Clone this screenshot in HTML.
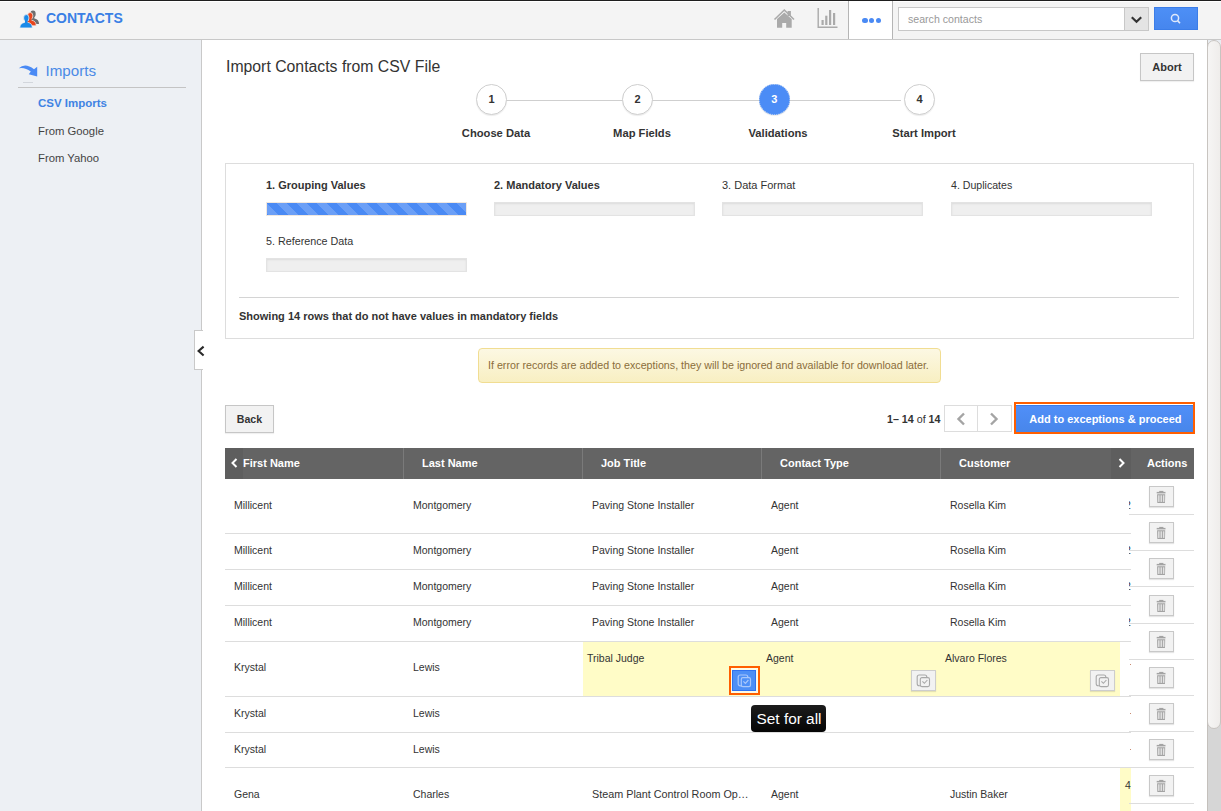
<!DOCTYPE html>
<html><head><meta charset="utf-8">
<style>
*{box-sizing:border-box;margin:0;padding:0}
html,body{width:1221px;height:811px;overflow:hidden;background:#fff}
body{font-family:"Liberation Sans",sans-serif;color:#333;position:relative;font-size:11px}
.a{position:absolute;white-space:nowrap}
.b{font-weight:bold}
.ln{position:absolute;background:#ddd}
#top{position:absolute;left:0;top:0;width:1221px;height:40px;background:#f4f4f4;border-bottom:1px solid #c8c8c8}
#side{position:absolute;left:0;top:40px;width:202px;height:771px;background:#edf0f4;border-right:1px solid #c9c9c9}
.btn{position:absolute;background:#f2f2f2;border:1px solid #c6c6c6;font-weight:bold;color:#333;text-align:center;box-shadow:0 1px 1px rgba(0,0,0,.06)}
.circ{position:absolute;width:31px;height:31px;border-radius:50%;border:1px solid #cfcfcf;background:#fff;font-weight:bold;font-size:11px;text-align:center;line-height:29px;color:#333;box-shadow:0 1px 1px rgba(0,0,0,.08)}
.stl{position:absolute;font-weight:bold;font-size:11.2px;color:#333;text-align:center;width:120px;top:127px}
.vt{position:absolute;font-size:11px;color:#333}
.bar{position:absolute;width:201px;height:14px;background:#efefef;border:1px solid #e3e3e3;box-shadow:inset 0 1px 2px rgba(0,0,0,.08)}
.th{position:absolute;top:457px;color:#fff;font-weight:bold;font-size:11px}
.td{position:absolute;color:#333;font-size:10.5px}
.rs{position:absolute;height:1px;background:#ddd}
.trash{position:absolute;left:1149px;width:25px;height:21px;background:#f2f2f2;border:1px solid #c8c8c8;box-shadow:0 1px 1px rgba(0,0,0,.1)}
.copy{position:absolute;width:25px;height:21px;background:#f2f2f2;border:1px solid #cdcdcd;box-shadow:0 1px 1px rgba(0,0,0,.1)}
</style></head><body>
<div id="top"></div>
<div class="a" style="left:0;top:0;width:1221px;height:1px;background:#1e1e1e"></div>
<div class="a" style="left:0;top:1px;width:1221px;height:1px;background:#fff"></div>
<!-- logo -->
<svg class="a" style="left:0;top:0" width="44" height="34" viewBox="0 0 44 34"><g transform="translate(6.7,-4)"><ellipse cx="26.3" cy="18" rx="2.7" ry="3.4" fill="#6e6e6e" /><path d="M19.8 27.9 Q19.8 23.2 24.6 22.4 L28 22.4 Q32.3 23.2 32.3 27.9 Z" fill="#6e6e6e" /><rect x="25" y="20" width="2.6" height="3.5" fill="#6e6e6e"/></g><g transform="translate(3.9,-2.1)"><ellipse cx="26.3" cy="18" rx="2.7" ry="3.4" fill="#e8461e" stroke="#f4f4f4" stroke-width="0.7"/><path d="M19.8 27.9 Q19.8 23.2 24.6 22.4 L28 22.4 Q32.3 23.2 32.3 27.9 Z" fill="#e8461e" stroke="#f4f4f4" stroke-width="0.7"/><rect x="25" y="20" width="2.6" height="3.5" fill="#e8461e"/></g><g transform="translate(0,0)"><ellipse cx="26.3" cy="18" rx="2.7" ry="3.4" fill="#1a8ae8" stroke="#f4f4f4" stroke-width="0.7"/><path d="M19.8 27.9 Q19.8 23.2 24.6 22.4 L28 22.4 Q32.3 23.2 32.3 27.9 Z" fill="#1a8ae8" stroke="#f4f4f4" stroke-width="0.7"/><rect x="25" y="20" width="2.6" height="3.5" fill="#1a8ae8"/></g></svg>
<div class="a b" style="left:46px;top:10px;font-size:14px;color:#3a7fe5">CONTACTS</div>
<!-- header icons -->
<svg class="a" style="left:770px;top:5px" width="30" height="28" viewBox="770 5 30 28">
 <path d="M774.5 19.5 L784.3 10 L794 19.5" fill="none" stroke="#aaa" stroke-width="1.6"/>
 <path d="M777 27.8 L777 19 L784.3 12.5 L791.7 19 L791.7 27.8 L786.2 27.8 L786.2 23 L782.2 23 L782.2 27.8 Z" fill="#aaa"/>
 <rect x="787.6" y="11" width="3.3" height="5" fill="#aaa"/>
</svg>
<svg class="a" style="left:815px;top:5px" width="26" height="26" viewBox="815 5 26 26">
 <path d="M818.2 8 L818.2 27.2 L837.5 27.2" fill="none" stroke="#aaa" stroke-width="1.4"/>
 <rect x="821.5" y="20" width="2.2" height="5" fill="#aaa"/>
 <rect x="825.2" y="15.7" width="2.2" height="9.3" fill="#aaa"/>
 <rect x="829" y="10" width="2.2" height="15" fill="#aaa"/>
 <rect x="833" y="13" width="2.2" height="12" fill="#aaa"/>
</svg>
<div class="a" style="left:848px;top:1px;width:45px;height:38px;background:#fff;border-left:1px solid #b5b5b5;border-right:1px solid #b5b5b5"></div>
<div class="a" style="left:862px;top:17.5px;width:5.5px;height:5.5px;border-radius:50%;background:#4a8af4"></div>
<div class="a" style="left:868.8px;top:17.5px;width:5.5px;height:5.5px;border-radius:50%;background:#4a8af4"></div>
<div class="a" style="left:875.6px;top:17.5px;width:5.5px;height:5.5px;border-radius:50%;background:#4a8af4"></div>
<div class="a" style="left:898px;top:7px;width:227px;height:24px;background:#fff;border:1px solid #c8c8c8"></div>
<div class="a" style="left:908px;top:13px;font-size:10.6px;color:#999">search contacts</div>
<div class="a" style="left:1124px;top:7px;width:25px;height:24px;background:#e4e4e4;border:1px solid #c8c8c8"></div>
<svg class="a" style="left:1130px;top:15px" width="13" height="10" viewBox="0 0 13 10"><path d="M1.8 2.2 L6.5 6.8 L11.2 2.2" fill="none" stroke="#333" stroke-width="2.2"/></svg>
<div class="a" style="left:1154px;top:7px;width:44px;height:23px;background:linear-gradient(#4d8ff6,#4686ee);border:1px solid #3b7de8"></div>
<svg class="a" style="left:1168px;top:11px" width="16" height="16" viewBox="0 0 16 16"><circle cx="7" cy="7" r="3.6" fill="none" stroke="#dfe9fb" stroke-width="1.5"/><path d="M9.6 9.6 L12 12.2" stroke="#dfe9fb" stroke-width="1.6"/></svg>

<div id="side"></div>
<svg class="a" style="left:14px;top:58px" width="30" height="26" viewBox="14 58 30 26"><path d="M18.8 68.3 Q25 62.3 34 69.2 L37.2 66.8 L37.2 76.6 L28.8 74.2 L30.8 71.6 Q24.5 66.8 18.8 68.3 Z" fill="#4a8af4"/><path d="M23 82.5 L33 82.5" stroke="#d2d6dc" stroke-width="1"/></svg>
<div class="a" style="left:45.5px;top:62px;font-size:15.2px;color:#4a8ae6">Imports</div>
<div class="a" style="left:18px;top:87px;width:168px;height:1px;background:#c4c4c4"></div>
<div class="a b" style="left:38px;top:96.5px;font-size:11.5px;color:#3f83e3">CSV Imports</div>
<div class="a" style="left:38px;top:125px;font-size:11.3px;color:#444">From Google</div>
<div class="a" style="left:38px;top:152px;font-size:11.3px;color:#444">From Yahoo</div>

<!-- sidebar toggle -->
<div class="a" style="left:194px;top:330px;width:9px;height:40px;background:#fff;border:1px solid #c9c9c9;border-right:none"></div>
<svg class="a" style="left:195px;top:344px" width="10" height="14" viewBox="0 0 10 14"><path d="M8.6 2.6 L3.6 7 L8.6 11.6" fill="none" stroke="#2a2a2a" stroke-width="2.1"/></svg>

<!-- title -->
<div class="a" style="left:226px;top:58px;font-size:15.8px;color:#333">Import Contacts from CSV File</div>
<div class="btn" style="left:1140px;top:53px;width:54px;height:28px;font-size:11px;line-height:26px">Abort</div>

<!-- steps -->
<div class="ln" style="left:506px;top:100px;width:395px;height:1px;background:#cfcfcf"></div>
<div class="circ" style="left:476px;top:84px">1</div>
<div class="circ" style="left:622px;top:84px">2</div>
<div class="circ" style="left:758.5px;top:84px;width:31.5px;height:31px;line-height:29px;background:#4b8cf6;border:1px dotted #a9c6f3;color:#fff">3</div>
<div class="circ" style="left:904px;top:84px">4</div>
<div class="stl" style="left:436px">Choose Data</div>
<div class="stl" style="left:582px">Map Fields</div>
<div class="stl" style="left:718px">Validations</div>
<div class="stl" style="left:864px">Start Import</div>

<!-- validation panel -->
<div class="a" style="left:225px;top:163px;width:969px;height:176px;border:1px solid #ddd"></div>
<div class="vt b" style="left:266px;top:179px">1. Grouping Values</div>
<div class="vt b" style="left:494px;top:179px">2. Mandatory Values</div>
<div class="vt" style="left:722px;top:179px">3. Data Format</div>
<div class="vt" style="left:951px;top:179px;font-size:10.6px">4. Duplicates</div>
<div class="vt" style="left:266px;top:235px;font-size:10.75px">5. Reference Data</div>
<div class="a" style="left:266px;top:202px;width:201px;height:14px;background-color:#4a8af4;background-image:linear-gradient(45deg,rgba(255,255,255,.18) 25%,transparent 25%,transparent 50%,rgba(255,255,255,.18) 50%,rgba(255,255,255,.18) 75%,transparent 75%,transparent);background-size:20px 20px;background-position:10px 0;border:1px solid #f0e8e0"></div>
<div class="bar" style="left:494px;top:202px"></div>
<div class="bar" style="left:722px;top:202px"></div>
<div class="bar" style="left:951px;top:202px"></div>
<div class="bar" style="left:266px;top:258px"></div>
<div class="ln" style="left:239px;top:297px;width:940px;height:1px;background:#d4d4d4"></div>
<div class="vt b" style="left:239px;top:310px">Showing 14 rows that do not have values in mandatory fields</div>

<!-- alert -->
<div class="a" style="left:478px;top:348px;width:463px;height:35px;border:1px solid #f1dd92;border-radius:4px;background:linear-gradient(#fcf8e3,#f8efc2)"></div>
<div class="a" style="left:488px;top:359px;font-size:10.7px;color:#8a6d3b">If error records are added to exceptions, they will be ignored and available for download later.</div>

<!-- toolbar -->
<div class="btn" style="left:225px;top:405px;width:49px;height:28px;font-size:10.6px;line-height:26px">Back</div>
<div class="a" style="left:887px;top:413px;font-size:10.7px;color:#333"><b>1– 14</b> of <b>14</b></div>
<div class="a" style="left:944px;top:405px;width:68px;height:27px;border:1px solid #ddd;background:#fff"></div>
<div class="a" style="left:977px;top:405px;width:1px;height:27px;background:#ddd"></div>
<svg class="a" style="left:955px;top:412px" width="12" height="14" viewBox="0 0 12 14"><path d="M9 1.5 L3.5 7 L9 12.5" fill="none" stroke="#a4a4a4" stroke-width="2.4"/></svg>
<svg class="a" style="left:988px;top:412px" width="12" height="14" viewBox="0 0 12 14"><path d="M3 1.5 L8.5 7 L3 12.5" fill="none" stroke="#a4a4a4" stroke-width="2.4"/></svg>
<div class="a" style="left:1014px;top:402px;width:181px;height:32px;border:2px solid #ff5f00"></div>
<div class="a" style="left:1016px;top:404px;width:177px;height:28px;background:linear-gradient(#508ff9,#4886ea);border-top:1px solid #fff;box-shadow:inset 0 1px 0 #3a7cea"></div>
<div class="a b" style="left:1029.3px;top:412.6px;font-size:11px;color:#fff">Add to exceptions &amp; proceed</div>

<!-- table header -->
<div class="a" style="left:225px;top:448px;width:969px;height:31px;background:#646464"></div>
<div class="a" style="left:225px;top:448px;width:18px;height:31px;background:#5e5e5e"></div>
<div class="a" style="left:1111px;top:448px;width:20px;height:31px;background:#5e5e5e"></div>
<div class="a" style="left:403px;top:448px;width:1px;height:31px;background:#7a7a7a"></div>
<div class="a" style="left:582px;top:448px;width:1px;height:31px;background:#7a7a7a"></div>
<div class="a" style="left:761px;top:448px;width:1px;height:31px;background:#7a7a7a"></div>
<div class="a" style="left:940px;top:448px;width:1px;height:31px;background:#7a7a7a"></div>
<svg class="a" style="left:229px;top:457px" width="10" height="12" viewBox="0 0 10 12"><path d="M7.5 2 L3.5 6 L7.5 10" fill="none" stroke="#fff" stroke-width="2"/></svg>
<svg class="a" style="left:1117px;top:457px" width="10" height="12" viewBox="0 0 10 12"><path d="M2.5 2 L6.5 6 L2.5 10" fill="none" stroke="#fff" stroke-width="2"/></svg>
<div class="th" style="left:243px">First Name</div>
<div class="th" style="left:422px">Last Name</div>
<div class="th" style="left:601px">Job Title</div>
<div class="th" style="left:780px">Contact Type</div>
<div class="th" style="left:959px">Customer</div>
<div class="th" style="left:1147px">Actions</div>

<!-- rows -->
<div id="rows">
<div class="rs" style="left:225px;top:533px;width:906px"></div>
<div class="rs" style="left:225px;top:569px;width:906px"></div>
<div class="rs" style="left:225px;top:605px;width:906px"></div>
<div class="rs" style="left:225px;top:641px;width:906px"></div>
<div class="a" style="left:583px;top:642px;width:537px;height:54px;background:#fffcc7"></div>
<div class="rs" style="left:225px;top:696px;width:906px"></div>
<div class="rs" style="left:225px;top:732px;width:906px"></div>
<div class="rs" style="left:225px;top:767px;width:906px"></div>
<div class="a" style="left:1120px;top:768px;width:11px;height:43px;background:#fffcc7"></div>

<div class="td" style="left:234px;top:499px">Millicent</div>
<div class="td" style="left:413px;top:499px">Montgomery</div>
<div class="td" style="left:592px;top:499px">Paving Stone Installer</div>
<div class="td" style="left:771px;top:499px">Agent</div>
<div class="td" style="left:950px;top:499px">Rosella Kim</div>

<div class="td" style="left:234px;top:544px">Millicent</div>
<div class="td" style="left:413px;top:544px">Montgomery</div>
<div class="td" style="left:592px;top:544px">Paving Stone Installer</div>
<div class="td" style="left:771px;top:544px">Agent</div>
<div class="td" style="left:950px;top:544px">Rosella Kim</div>

<div class="td" style="left:234px;top:580px">Millicent</div>
<div class="td" style="left:413px;top:580px">Montgomery</div>
<div class="td" style="left:592px;top:580px">Paving Stone Installer</div>
<div class="td" style="left:771px;top:580px">Agent</div>
<div class="td" style="left:950px;top:580px">Rosella Kim</div>

<div class="td" style="left:234px;top:616px">Millicent</div>
<div class="td" style="left:413px;top:616px">Montgomery</div>
<div class="td" style="left:592px;top:616px">Paving Stone Installer</div>
<div class="td" style="left:771px;top:616px">Agent</div>
<div class="td" style="left:950px;top:616px">Rosella Kim</div>

<div class="td" style="left:234px;top:661px">Krystal</div>
<div class="td" style="left:413px;top:661px">Lewis</div>
<div class="td" style="left:587px;top:652px">Tribal Judge</div>
<div class="td" style="left:766px;top:652px">Agent</div>
<div class="td" style="left:945px;top:652px">Alvaro Flores</div>

<div class="td" style="left:234px;top:707px">Krystal</div>
<div class="td" style="left:413px;top:707px">Lewis</div>
<div class="td" style="left:234px;top:743px">Krystal</div>
<div class="td" style="left:413px;top:743px">Lewis</div>

<div class="td" style="left:234px;top:788px">Gena</div>
<div class="td" style="left:413px;top:788px">Charles</div>
<div class="td" style="left:592px;top:788px;font-size:10.8px">Steam Plant Control Room Op…</div>
<div class="td" style="left:771px;top:788px">Agent</div>
<div class="td" style="left:950px;top:788px">Justin Baker</div>
<div class="td" style="left:1125px;top:779px">4</div>
</div>

<!-- copy buttons -->
<div class="a" style="left:729px;top:666px;width:31px;height:29px;border:2px solid #ff5f00;background:#fdfae6"></div>
<div class="a" style="left:732px;top:670px;width:24px;height:21px;background:#4d8ff6;border:1px solid #2f72f0"><svg width="25" height="21" viewBox="0 0 25 21" style="position:absolute;left:-1px;top:-1px"><rect x="6.2" y="5" width="9.6" height="10.8" rx="2" fill="none" stroke="#a9c8fb" stroke-width="1.2"/><rect x="9.3" y="7.6" width="9.2" height="9" rx="1.6" fill="#4d8ff6" stroke="#a9c8fb" stroke-width="1.2"/><path d="M11.4 11.3 L13.4 13.3 L16.4 10" fill="none" stroke="#a9c8fb" stroke-width="1.2"/></svg></div>
<div class="copy" style="left:911px;top:670px"><svg width="25" height="21" viewBox="0 0 25 21" style="position:absolute;left:-1px;top:-1px"><rect x="6.2" y="5" width="9.6" height="10.8" rx="2" fill="none" stroke="#a8a8a8" stroke-width="1.1"/><rect x="9.3" y="7.6" width="9.2" height="9" rx="1.6" fill="#f2f2f2" stroke="#a8a8a8" stroke-width="1.1"/><path d="M11.4 11.3 L13.4 13.3 L16.4 10" fill="none" stroke="#a8a8a8" stroke-width="1.1"/></svg></div>
<div class="copy" style="left:1090px;top:670px"><svg width="25" height="21" viewBox="0 0 25 21" style="position:absolute;left:-1px;top:-1px"><rect x="6.2" y="5" width="9.6" height="10.8" rx="2" fill="none" stroke="#a8a8a8" stroke-width="1.1"/><rect x="9.3" y="7.6" width="9.2" height="9" rx="1.6" fill="#f2f2f2" stroke="#a8a8a8" stroke-width="1.1"/><path d="M11.4 11.3 L13.4 13.3 L16.4 10" fill="none" stroke="#a8a8a8" stroke-width="1.1"/></svg></div>

<!-- tooltip -->
<div class="a" style="left:751px;top:705px;width:75px;height:27px;border-radius:4px;background:linear-gradient(#1c1c1c,#050505)"></div>
<div class="a" style="left:756.5px;top:710px;font-size:15.4px;color:#fff">Set for all</div>

<div class="a" style="left:1129px;top:501px;width:2px;height:9px;overflow:hidden"><div class="a" style="left:-4px;top:-2px;font-size:10.5px;color:#333">2</div></div>
<div class="a" style="left:1129px;top:546px;width:2px;height:9px;overflow:hidden"><div class="a" style="left:-4px;top:-2px;font-size:10.5px;color:#333">2</div></div>
<div class="a" style="left:1129px;top:582px;width:2px;height:9px;overflow:hidden"><div class="a" style="left:-4px;top:-2px;font-size:10.5px;color:#333">2</div></div>
<div class="a" style="left:1129px;top:618px;width:2px;height:9px;overflow:hidden"><div class="a" style="left:-4px;top:-2px;font-size:10.5px;color:#333">2</div></div>
<div class="a" style="left:1130px;top:664px;width:1px;height:1px;background:#c98a70"></div>
<div class="a" style="left:1130px;top:713px;width:1px;height:1px;background:#c98a70"></div>
<div class="a" style="left:1130px;top:749px;width:1px;height:1px;background:#c98a70"></div>
<!-- actions col -->
<div id="act">
<div class="a" style="left:1131px;top:479px;width:63px;height:332px;background:#fff"></div>
<div class="rs" style="left:1129px;top:514px;width:65px"></div>
<div class="rs" style="left:1129px;top:550px;width:65px"></div>
<div class="rs" style="left:1129px;top:586px;width:65px"></div>
<div class="rs" style="left:1129px;top:623px;width:65px"></div>
<div class="rs" style="left:1129px;top:659px;width:65px"></div>
<div class="rs" style="left:1129px;top:695px;width:65px"></div>
<div class="rs" style="left:1129px;top:731px;width:65px"></div>
<div class="rs" style="left:1129px;top:767px;width:65px"></div>
<div class="rs" style="left:1129px;top:803px;width:65px"></div>
<div class="trash" style="top:486px"><svg width="23" height="19" viewBox="1150 487 23 19" style="position:absolute;left:0;top:0"><rect x="1159.2" y="490.9" width="4.2" height="1.2" fill="#a3a3a3"/><rect x="1156.7" y="491.9" width="8.8" height="1.5" fill="#a3a3a3"/><path d="M1157.1 494.3 L1165.2 494.3 L1165 502.4 Q1165 503 1164.4 503 L1157.9 503 Q1157.3 503 1157.3 502.4 Z" fill="#a3a3a3"/><rect x="1158.1" y="495.3" width="1.45" height="6.6" fill="#e2e2e2"/><rect x="1160.5" y="495.3" width="1.45" height="6.6" fill="#e2e2e2"/><rect x="1162.9" y="495.3" width="1.45" height="6.6" fill="#e2e2e2"/></svg></div>
<div class="trash" style="top:522px"><svg width="23" height="19" viewBox="1150 487 23 19" style="position:absolute;left:0;top:0"><rect x="1159.2" y="490.9" width="4.2" height="1.2" fill="#a3a3a3"/><rect x="1156.7" y="491.9" width="8.8" height="1.5" fill="#a3a3a3"/><path d="M1157.1 494.3 L1165.2 494.3 L1165 502.4 Q1165 503 1164.4 503 L1157.9 503 Q1157.3 503 1157.3 502.4 Z" fill="#a3a3a3"/><rect x="1158.1" y="495.3" width="1.45" height="6.6" fill="#e2e2e2"/><rect x="1160.5" y="495.3" width="1.45" height="6.6" fill="#e2e2e2"/><rect x="1162.9" y="495.3" width="1.45" height="6.6" fill="#e2e2e2"/></svg></div>
<div class="trash" style="top:558px"><svg width="23" height="19" viewBox="1150 487 23 19" style="position:absolute;left:0;top:0"><rect x="1159.2" y="490.9" width="4.2" height="1.2" fill="#a3a3a3"/><rect x="1156.7" y="491.9" width="8.8" height="1.5" fill="#a3a3a3"/><path d="M1157.1 494.3 L1165.2 494.3 L1165 502.4 Q1165 503 1164.4 503 L1157.9 503 Q1157.3 503 1157.3 502.4 Z" fill="#a3a3a3"/><rect x="1158.1" y="495.3" width="1.45" height="6.6" fill="#e2e2e2"/><rect x="1160.5" y="495.3" width="1.45" height="6.6" fill="#e2e2e2"/><rect x="1162.9" y="495.3" width="1.45" height="6.6" fill="#e2e2e2"/></svg></div>
<div class="trash" style="top:595px"><svg width="23" height="19" viewBox="1150 487 23 19" style="position:absolute;left:0;top:0"><rect x="1159.2" y="490.9" width="4.2" height="1.2" fill="#a3a3a3"/><rect x="1156.7" y="491.9" width="8.8" height="1.5" fill="#a3a3a3"/><path d="M1157.1 494.3 L1165.2 494.3 L1165 502.4 Q1165 503 1164.4 503 L1157.9 503 Q1157.3 503 1157.3 502.4 Z" fill="#a3a3a3"/><rect x="1158.1" y="495.3" width="1.45" height="6.6" fill="#e2e2e2"/><rect x="1160.5" y="495.3" width="1.45" height="6.6" fill="#e2e2e2"/><rect x="1162.9" y="495.3" width="1.45" height="6.6" fill="#e2e2e2"/></svg></div>
<div class="trash" style="top:631px"><svg width="23" height="19" viewBox="1150 487 23 19" style="position:absolute;left:0;top:0"><rect x="1159.2" y="490.9" width="4.2" height="1.2" fill="#a3a3a3"/><rect x="1156.7" y="491.9" width="8.8" height="1.5" fill="#a3a3a3"/><path d="M1157.1 494.3 L1165.2 494.3 L1165 502.4 Q1165 503 1164.4 503 L1157.9 503 Q1157.3 503 1157.3 502.4 Z" fill="#a3a3a3"/><rect x="1158.1" y="495.3" width="1.45" height="6.6" fill="#e2e2e2"/><rect x="1160.5" y="495.3" width="1.45" height="6.6" fill="#e2e2e2"/><rect x="1162.9" y="495.3" width="1.45" height="6.6" fill="#e2e2e2"/></svg></div>
<div class="trash" style="top:667px"><svg width="23" height="19" viewBox="1150 487 23 19" style="position:absolute;left:0;top:0"><rect x="1159.2" y="490.9" width="4.2" height="1.2" fill="#a3a3a3"/><rect x="1156.7" y="491.9" width="8.8" height="1.5" fill="#a3a3a3"/><path d="M1157.1 494.3 L1165.2 494.3 L1165 502.4 Q1165 503 1164.4 503 L1157.9 503 Q1157.3 503 1157.3 502.4 Z" fill="#a3a3a3"/><rect x="1158.1" y="495.3" width="1.45" height="6.6" fill="#e2e2e2"/><rect x="1160.5" y="495.3" width="1.45" height="6.6" fill="#e2e2e2"/><rect x="1162.9" y="495.3" width="1.45" height="6.6" fill="#e2e2e2"/></svg></div>
<div class="trash" style="top:703px"><svg width="23" height="19" viewBox="1150 487 23 19" style="position:absolute;left:0;top:0"><rect x="1159.2" y="490.9" width="4.2" height="1.2" fill="#a3a3a3"/><rect x="1156.7" y="491.9" width="8.8" height="1.5" fill="#a3a3a3"/><path d="M1157.1 494.3 L1165.2 494.3 L1165 502.4 Q1165 503 1164.4 503 L1157.9 503 Q1157.3 503 1157.3 502.4 Z" fill="#a3a3a3"/><rect x="1158.1" y="495.3" width="1.45" height="6.6" fill="#e2e2e2"/><rect x="1160.5" y="495.3" width="1.45" height="6.6" fill="#e2e2e2"/><rect x="1162.9" y="495.3" width="1.45" height="6.6" fill="#e2e2e2"/></svg></div>
<div class="trash" style="top:739px"><svg width="23" height="19" viewBox="1150 487 23 19" style="position:absolute;left:0;top:0"><rect x="1159.2" y="490.9" width="4.2" height="1.2" fill="#a3a3a3"/><rect x="1156.7" y="491.9" width="8.8" height="1.5" fill="#a3a3a3"/><path d="M1157.1 494.3 L1165.2 494.3 L1165 502.4 Q1165 503 1164.4 503 L1157.9 503 Q1157.3 503 1157.3 502.4 Z" fill="#a3a3a3"/><rect x="1158.1" y="495.3" width="1.45" height="6.6" fill="#e2e2e2"/><rect x="1160.5" y="495.3" width="1.45" height="6.6" fill="#e2e2e2"/><rect x="1162.9" y="495.3" width="1.45" height="6.6" fill="#e2e2e2"/></svg></div>
<div class="trash" style="top:775px"><svg width="23" height="19" viewBox="1150 487 23 19" style="position:absolute;left:0;top:0"><rect x="1159.2" y="490.9" width="4.2" height="1.2" fill="#a3a3a3"/><rect x="1156.7" y="491.9" width="8.8" height="1.5" fill="#a3a3a3"/><path d="M1157.1 494.3 L1165.2 494.3 L1165 502.4 Q1165 503 1164.4 503 L1157.9 503 Q1157.3 503 1157.3 502.4 Z" fill="#a3a3a3"/><rect x="1158.1" y="495.3" width="1.45" height="6.6" fill="#e2e2e2"/><rect x="1160.5" y="495.3" width="1.45" height="6.6" fill="#e2e2e2"/><rect x="1162.9" y="495.3" width="1.45" height="6.6" fill="#e2e2e2"/></svg></div>
</div>

<!-- scrollbar -->
<div class="a" style="left:1207px;top:40px;width:14px;height:771px;background:#d6d6d6;border-left:1px solid #c4c0bc"></div>
<div class="a" style="left:1208px;top:40px;width:13px;height:10px;background:#e9edf2"></div>
<div class="a" style="left:1207px;top:40px;width:14px;height:689px;background:linear-gradient(90deg,#f6f5f4,#efedeb);border:1px solid #c8c4c0;border-radius:7px 7px 7px 7px"></div>
</body></html>
